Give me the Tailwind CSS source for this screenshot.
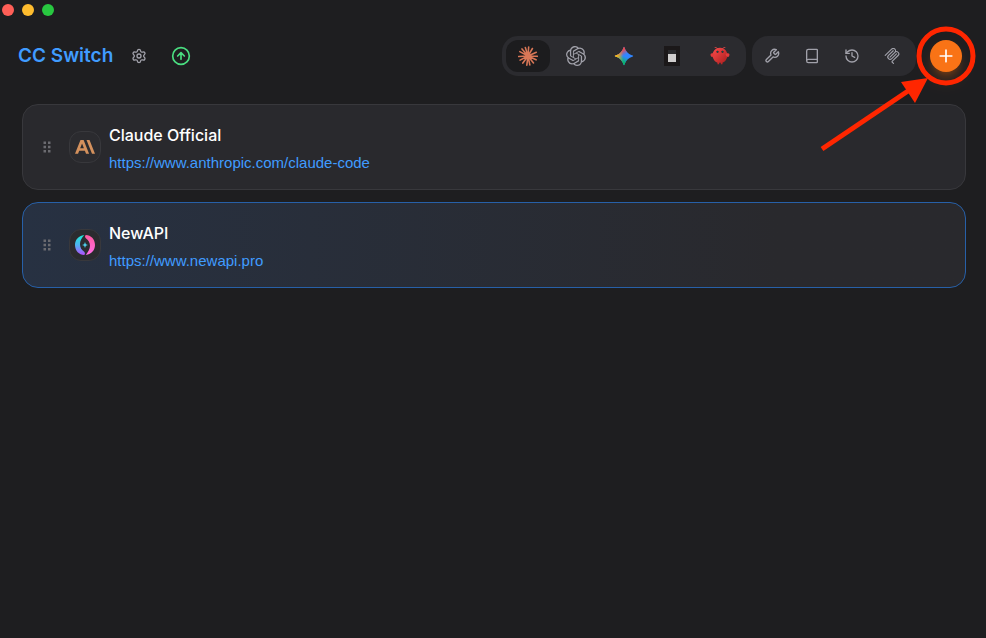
<!DOCTYPE html>
<html lang="en">
<head>
    <meta charset="UTF-8">
    <meta name="viewport" content="width=device-width, initial-scale=1.0">
    <title>CC Switch</title>
    <script src="https://cdn.jsdelivr.net/npm/@tailwindcss/browser@4"></script>
</head>
<body class="relative min-h-screen bg-[#1e1e20] font-['Inter',sans-serif] text-white">

    <!-- Window Controls Start -->
    <div class="flex h-5 items-center gap-2 px-0.5">
        <button type="button" aria-label="Close" class="size-3 rounded-full bg-[#ff5f57]"></button>
        <button type="button" aria-label="Minimize" class="size-3 rounded-full bg-[#febc2e]"></button>
        <button type="button" aria-label="Zoom" class="size-3 rounded-full bg-[#28c840]"></button>
    </div>
    <!-- Window Controls End -->

    <!-- Header Start -->
    <header class="flex items-center justify-between py-4 pl-[18px] pr-6">
        <div class="flex items-center">
            <h1 class="text-[19px]/8 font-semibold"><a href="#" class="text-[#409cff]">CC Switch</a></h1>
            <button type="button" aria-label="Settings" class="ml-2.5 flex size-8 items-center justify-center text-[#a1a1aa]">
                <svg class="size-4" viewBox="0 0 24 24" fill="none" stroke="currentColor" stroke-width="2" stroke-linecap="round" stroke-linejoin="round">
                    <path d="M9.671 4.136a2.34 2.34 0 0 1 4.659 0 2.34 2.34 0 0 0 3.319 1.915 2.34 2.34 0 0 1 2.33 4.033 2.34 2.34 0 0 0 0 3.831 2.34 2.34 0 0 1-2.33 4.033 2.34 2.34 0 0 0-3.319 1.915 2.34 2.34 0 0 1-4.659 0 2.34 2.34 0 0 0-3.32-1.915 2.34 2.34 0 0 1-2.33-4.033 2.34 2.34 0 0 0 0-3.831A2.34 2.34 0 0 1 6.35 6.051a2.34 2.34 0 0 0 3.319-1.915"/>
                    <circle cx="12" cy="12" r="3"/>
                </svg>
            </button>
            <button type="button" aria-label="Update available" class="ml-2.5 flex size-8 items-center justify-center text-[#4ade80]">
                <svg class="size-5" viewBox="0 0 24 24" fill="none" stroke="currentColor" stroke-width="2" stroke-linecap="round" stroke-linejoin="round">
                    <circle cx="12" cy="12" r="10"/>
                    <path d="m8 12 4-4 4 4M12 16V8"/>
                </svg>
            </button>
        </div>

        <div class="flex items-center">
            <!-- App Switcher Start -->
            <nav class="flex gap-1 rounded-2xl bg-[#2b2b2f] p-1">
                <button type="button" aria-label="Claude" class="flex h-8 w-11 items-center justify-center rounded-xl bg-[#1c1c1e]">
                    <svg class="size-5" viewBox="0 0 24 24" fill="none" stroke="#d97757" stroke-width="1.9" stroke-linecap="round">
                        <path d="M12 12 12.8 1.2M12 12 17.3 3M12 12 22 7.5M12 12 23.2 12.4M12 12 21.7 16.6M12 12 18.6 20.4M12 12 14.2 22.7M12 12 10.6 23M12 12 5.8 20.5M12 12 2.5 17M12 12 .8 12.6M12 12 2.2 6.8M12 12 4.8 3.5M12 12 8.8 1.8"/>
                    </svg>
                </button>
                <button type="button" aria-label="Codex" class="flex h-8 w-11 items-center justify-center rounded-xl text-[#a1a1aa]">
                    <svg class="size-5" viewBox="0 0 24 24" fill="currentColor">
                        <path d="M22.2819 9.8211a5.9847 5.9847 0 0 0-.5157-4.9108 6.0462 6.0462 0 0 0-6.5098-2.9A6.0651 6.0651 0 0 0 4.9807 4.1818a5.9847 5.9847 0 0 0-3.9977 2.9 6.0462 6.0462 0 0 0 .7427 7.0966 5.98 5.98 0 0 0 .511 4.9107 6.051 6.051 0 0 0 6.5146 2.9001A5.9847 5.9847 0 0 0 13.2599 24a6.0557 6.0557 0 0 0 5.7718-4.2058 5.9894 5.9894 0 0 0 3.9977-2.9001 6.0557 6.0557 0 0 0-.7475-7.0729zm-9.022 12.6081a4.4755 4.4755 0 0 1-2.8764-1.0408l.1419-.0804 4.7783-2.7582a.7948.7948 0 0 0 .3927-.6813v-6.7369l2.02 1.1686a.071.071 0 0 1 .038.052v5.5826a4.504 4.504 0 0 1-4.4945 4.4944zm-9.6607-4.1254a4.4708 4.4708 0 0 1-.5346-3.0137l.142.0852 4.783 2.7582a.7712.7712 0 0 0 .7806 0l5.8428-3.3685v2.3324a.0804.0804 0 0 1-.0332.0615L9.74 19.9502a4.4992 4.4992 0 0 1-6.1408-1.6464zM2.3408 7.8956a4.485 4.485 0 0 1 2.3655-1.9728V11.6a.7664.7664 0 0 0 .3879.6765l5.8144 3.3543-2.0201 1.1685a.0757.0757 0 0 1-.071 0l-4.8303-2.7865A4.504 4.504 0 0 1 2.3408 7.872zm16.5963 3.8558L13.1038 8.364 15.1192 7.2a.0757.0757 0 0 1 .071 0l4.8303 2.7913a4.4944 4.4944 0 0 1-.6765 8.1042v-5.6772a.79.79 0 0 0-.407-.667zm2.0107-3.0231l-.142-.0852-4.7735-2.7818a.7759.7759 0 0 0-.7854 0L9.409 9.2297V6.8974a.0662.0662 0 0 1 .0284-.0615l4.8303-2.7866a4.4992 4.4992 0 0 1 6.6802 4.66zM8.3065 12.863l-2.02-1.1638a.0804.0804 0 0 1-.038-.0567V6.0742a4.4992 4.4992 0 0 1 7.3757-3.4537l-.142.0805L8.704 5.459a.7948.7948 0 0 0-.3927.6813zm1.0976-2.3654l2.602-1.4998 2.6069 1.4998v2.9994l-2.5974 1.4997-2.6067-1.4997Z"/>
                    </svg>
                </button>
                <button type="button" aria-label="Gemini" class="flex h-8 w-11 items-center justify-center rounded-xl">
                    <svg class="size-5" viewBox="0 0 24 24">
                        <defs>
                            <path id="gem" d="M20.616 10.835a14.147 14.147 0 0 1-4.45-3.001 14.111 14.111 0 0 1-3.678-6.452.503.503 0 0 0-.975 0 14.134 14.134 0 0 1-3.679 6.452 14.155 14.155 0 0 1-4.45 3.001c-.65.28-1.318.505-2.002.678a.502.502 0 0 0 0 .975c.684.172 1.35.397 2.002.677a14.147 14.147 0 0 1 4.45 3.001 14.112 14.112 0 0 1 3.679 6.453.502.502 0 0 0 .975 0c.172-.685.397-1.351.677-2.003a14.145 14.145 0 0 1 3.001-4.45 14.113 14.113 0 0 1 6.453-3.678.503.503 0 0 0 0-.975 13.245 13.245 0 0 1-2.003-.678z"/>
                            <linearGradient id="gem-green" x1="9" y1="19" x2="12" y2="12" gradientUnits="userSpaceOnUse"><stop stop-color="#08b962"/><stop offset="1" stop-color="#08b962" stop-opacity="0"/></linearGradient>
                            <linearGradient id="gem-red" x1="9" y1="5" x2="12.5" y2="11" gradientUnits="userSpaceOnUse"><stop stop-color="#f94543"/><stop offset="1" stop-color="#f94543" stop-opacity="0"/></linearGradient>
                            <linearGradient id="gem-yellow" x1="3" y1="12" x2="11" y2="12" gradientUnits="userSpaceOnUse"><stop stop-color="#fabc12"/><stop offset="1" stop-color="#fabc12" stop-opacity="0"/></linearGradient>
                        </defs>
                        <use href="#gem" fill="#3186ff"/>
                        <use href="#gem" fill="url(#gem-green)"/>
                        <use href="#gem" fill="url(#gem-red)"/>
                        <use href="#gem" fill="url(#gem-yellow)"/>
                    </svg>
                </button>
                <button type="button" aria-label="OpenCode" class="flex h-8 w-11 items-center justify-center rounded-xl">
                    <svg class="h-5 w-4" viewBox="0 0 16 20">
                        <path d="M0 0h16v20H0z" fill="#1b1819"/>
                        <path d="M4 4h8v4H4z" fill="#2a2a2d"/>
                        <path d="M4 8h8v8H4z" fill="#d0cece"/>
                    </svg>
                </button>
                <button type="button" aria-label="OpenClaw" class="flex h-8 w-11 items-center justify-center rounded-xl">
                    <svg class="size-5" viewBox="0 0 120 120">
                        <defs>
                            <linearGradient id="claw" x1="0" y1="0" x2="1" y2="1"><stop stop-color="#ff4d4d"/><stop offset="1" stop-color="#a51b1b"/></linearGradient>
                        </defs>
                        <path d="M60 10c-30 0-45 25-45 45s15 40 30 45v10h10v-10s5 2 10 0v10h10v-10c15-5 30-25 30-45S90 10 60 10z" fill="url(#claw)"/>
                        <path d="M20 45C5 40 0 50 5 60s15 5 20-5c3-7 0-10-5-10zM100 45c15-5 20 5 15 15s-15 5-20-5c-3-7 0-10 5-10z" fill="#e23b3b"/>
                        <path d="M45 15Q35 5 30 8M75 15Q85 5 90 8" stroke="#ff4d4d" stroke-width="4" stroke-linecap="round" fill="none"/>
                        <circle cx="45" cy="35" r="6" fill="#050810"/>
                        <circle cx="75" cy="35" r="6" fill="#050810"/>
                        <circle cx="46" cy="34" r="3" fill="#00a9a4"/>
                        <circle cx="76" cy="34" r="3" fill="#00a9a4"/>
                    </svg>
                </button>
            </nav>
            <!-- App Switcher End -->

            <!-- Tools Start -->
            <div class="ml-1.5 flex gap-2 rounded-2xl bg-[#2b2b2f] py-1 pl-1 pr-2 text-[#a1a1aa]">
                <button type="button" aria-label="Skills" class="flex size-8 items-center justify-center">
                    <svg class="size-4" viewBox="0 0 24 24" fill="none" stroke="currentColor" stroke-width="2" stroke-linecap="round" stroke-linejoin="round">
                        <path d="M14.7 6.3a1 1 0 0 0 0 1.4l1.6 1.6a1 1 0 0 0 1.4 0l3.77-3.77a6 6 0 0 1-7.94 7.94l-6.91 6.91a2.12 2.12 0 0 1-3-3l6.91-6.91a6 6 0 0 1 7.94-7.94l-3.76 3.76z"/>
                    </svg>
                </button>
                <button type="button" aria-label="Prompts" class="flex size-8 items-center justify-center">
                    <svg class="size-4" viewBox="0 0 24 24" fill="none" stroke="currentColor" stroke-width="2" stroke-linecap="round" stroke-linejoin="round">
                        <path d="M4 19.5v-15A2.5 2.5 0 0 1 6.5 2H19a1 1 0 0 1 1 1v18a1 1 0 0 1-1 1H6.5a1 1 0 0 1 0-5H20"/>
                    </svg>
                </button>
                <button type="button" aria-label="Sessions" class="flex size-8 items-center justify-center">
                    <svg class="size-4" viewBox="0 0 24 24" fill="none" stroke="currentColor" stroke-width="2" stroke-linecap="round" stroke-linejoin="round">
                        <path d="M3 12a9 9 0 1 0 9-9 9.75 9.75 0 0 0-6.74 2.74L3 8"/>
                        <path d="M3 3v5h5M12 7v5l4 2"/>
                    </svg>
                </button>
                <button type="button" aria-label="MCP" class="flex size-8 items-center justify-center">
                    <svg class="size-4" viewBox="0 0 24 24" fill="currentColor">
                        <path d="M15.688 2.343a2.588 2.588 0 00-3.61 0l-9.626 9.44a.863.863 0 01-1.203 0 .823.823 0 010-1.18l9.626-9.44a4.313 4.313 0 016.016 0 4.116 4.116 0 011.204 3.54 4.3 4.3 0 013.609 1.18l.05.05a4.115 4.115 0 010 5.9l-8.706 8.537a.274.274 0 000 .393l1.788 1.754a.823.823 0 010 1.18.863.863 0 01-1.203 0l-1.788-1.753a1.92 1.92 0 010-2.754l8.706-8.538a2.47 2.47 0 000-3.54l-.05-.049a2.588 2.588 0 00-3.607-.003l-7.172 7.034-.002.002-.098.097a.863.863 0 01-1.204 0 .823.823 0 010-1.18l7.273-7.133a2.47 2.47 0 00-.003-3.537z"/>
                        <path d="M14.485 4.703a.823.823 0 000-1.18.863.863 0 00-1.204 0l-7.119 6.982a4.115 4.115 0 000 5.9 4.314 4.314 0 006.016 0l7.12-6.982a.823.823 0 000-1.18.863.863 0 00-1.204 0l-7.119 6.982a2.588 2.588 0 01-3.61 0 2.47 2.47 0 010-3.54l7.12-6.982z"/>
                    </svg>
                </button>
            </div>
            <!-- Tools End -->

            <button type="button" aria-label="Add provider" class="ml-3.5 flex size-8 items-center justify-center rounded-full bg-[#f97316] shadow-lg shadow-orange-500/30">
                <svg class="size-5" viewBox="0 0 24 24" fill="none" stroke="currentColor" stroke-width="2" stroke-linecap="round">
                    <path d="M5 12h14M12 5v14"/>
                </svg>
            </button>
        </div>
    </header>
    <!-- Header End -->

    <!-- Provider List Start -->
    <main class="pt-3 pl-[22px] pr-5">
        <ul class="flex flex-col gap-3">
            <li class="flex items-center gap-2 rounded-2xl border border-[#38383c] bg-[#29292d] py-4 pl-2.5 pr-4">
                <button type="button" aria-label="Drag Claude Official" class="p-1.5 text-[#6b6b70]">
                    <svg class="size-4" viewBox="0 0 16 16" fill="currentColor">
                        <path d="M4.5 2.5h2.5v2.5h-2.5zM9 2.5h2.5v2.5h-2.5zM4.5 6.75h2.5v2.5h-2.5zM9 6.75h2.5v2.5h-2.5zM4.5 11h2.5v2.5h-2.5zM9 11h2.5v2.5h-2.5z"/>
                    </svg>
                </button>
                <div class="flex size-8 items-center justify-center rounded-xl border border-[#38383c] bg-[#2b2b2f]">
                    <svg class="size-5 shrink-0" viewBox="0 0 24 24" fill="#d4915d">
                        <path d="M13.827 3.52h3.603L24 20h-3.603l-6.57-16.48zm-7.258 0h3.767L16.906 20h-3.674l-1.343-3.461H5.017l-1.344 3.46H0L6.57 3.522zm4.132 9.959L8.453 7.687 6.205 13.48H10.7z"/>
                    </svg>
                </div>
                <div class="flex flex-col items-start gap-1">
                    <h2 class="text-base/7 font-medium">Claude Official</h2>
                    <a href="https://www.anthropic.com/claude-code" class="font-['Liberation_Sans',sans-serif] text-[15px]/5 text-[#409cff]">https://www.anthropic.com/claude-code</a>
                </div>
            </li>
            <li class="flex items-center gap-2 rounded-2xl border border-[#2760a8] bg-linear-to-r from-[#273142] to-[#29292d] to-80% py-4 pl-2.5 pr-4">
                <button type="button" aria-label="Drag NewAPI" class="p-1.5 text-[#6b6b70]">
                    <svg class="size-4" viewBox="0 0 16 16" fill="currentColor">
                        <path d="M4.5 2.5h2.5v2.5h-2.5zM9 2.5h2.5v2.5h-2.5zM4.5 6.75h2.5v2.5h-2.5zM9 6.75h2.5v2.5h-2.5zM4.5 11h2.5v2.5h-2.5zM9 11h2.5v2.5h-2.5z"/>
                    </svg>
                </button>
                <div class="flex size-8 items-center justify-center rounded-xl border border-[#38383c] bg-[#2b2b2f]">
                    <svg class="size-5 shrink-0" viewBox="0 0 24 24">
                        <defs>
                            <linearGradient id="na-left" x1="0" y1="0" x2="0" y2="1"><stop stop-color="#1de9d5"/><stop offset=".5" stop-color="#4fb3f0"/><stop offset="1" stop-color="#b44dff"/></linearGradient>
                            <linearGradient id="na-right" x1="0" y1="0" x2="0" y2="1"><stop stop-color="#ff5ba0"/><stop offset="1" stop-color="#ff6ee8"/></linearGradient>
                        </defs>
                        <path d="M11 0C4 1 0 6 0 12c0 7 5 12 11 12 1.5-1 1-3 0-4-3-2-5-5-5-9 0-4 2-7 5-11z" fill="url(#na-left)"/>
                        <path d="M13 24c7-1 11-6 11-12 0-7-5-12-11-12-1.5 1-1 3 0 4 3 2 5 5 5 9 0 4-2 7-5 11z" fill="url(#na-right)"/>
                        <path d="M12 8.5 13 11 15.500 12 13 13 12 15.500 11 13 8.500 12 11 11z" fill="#4fd3f0"/>
                    </svg>
                </div>
                <div class="flex flex-col items-start gap-1">
                    <h2 class="text-base/7 font-medium">NewAPI</h2>
                    <a href="https://www.newapi.pro" class="font-['Liberation_Sans',sans-serif] text-[15px]/5 text-[#409cff]">https://www.newapi.pro</a>
                </div>
            </li>
        </ul>
    </main>
    <!-- Provider List End -->

    <!-- Callout over the add button -->
    <svg class="pointer-events-none absolute top-5 right-2 h-36 w-40" viewBox="0 0 160 144" fill="none" aria-hidden="true">
        <circle cx="128" cy="36" r="27" stroke="#ff2600" stroke-width="5"/>
        <path d="M4 129 90 71" stroke="#ff2600" stroke-width="5"/>
        <path d="M110 58 83 62 97 83z" fill="#ff2600"/>
    </svg>

</body>
</html>
